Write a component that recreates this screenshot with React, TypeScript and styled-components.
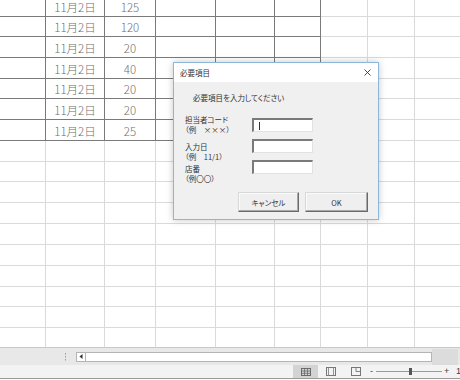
import React from "react";
import styled, { createGlobalStyle } from "styled-components";

const Global = createGlobalStyle`
  html, body { margin: 0; padding: 0; background: #fff; }
  body { width: 460px; height: 380px; overflow: hidden; font-family: "Noto Sans CJK JP", "Noto Sans", sans-serif; }
  * { box-sizing: border-box; }
`;

const COLS = "46px 59px 51px 60px 59px 46px 47px 47px 60px";

const Page = styled.div`
  position: relative;
  width: 460px;
  height: 380px;
  display: flex;
  flex-direction: column;
  overflow: hidden;
`;

const Sheet = styled.div`
  height: 347px;
  overflow: hidden;
  display: flex;
  flex-direction: column;
  flex-shrink: 0;
`;

const Row = styled.div<{ $h: number }>`
  display: grid;
  grid-template-columns: ${COLS};
  height: ${(p) => p.$h}px;
  flex-shrink: 0;
`;

const Cell = styled.div<{ $dark?: boolean }>`
  border-right: 1px solid ${(p) => (p.$dark ? "#7a7a7a" : "#dadada")};
  border-bottom: 1px solid ${(p) => (p.$dark ? "#7a7a7a" : "#dadada")};
  display: flex;
  align-items: flex-end;
  justify-content: center;
  padding-bottom: 2px;
  font-family: "Noto Sans CJK JP", sans-serif;
  font-weight: 300;
  font-size: 11.5px;
  line-height: 14px;
  color: #6e6e6e;
  white-space: nowrap;
`;

const Strip = styled.div`
  height: 18px;
  flex-shrink: 0;
  background: #e8e8e8;
  border-top: 1px solid #c8c8c8;
  display: flex;
  align-items: center;
  padding-left: 64px;
  overflow: hidden;
`;

const Grip = styled.svg`
  width: 3px;
  height: 8px;
  margin-right: 9px;
  flex-shrink: 0;
`;

const ArrowBox = styled.div`
  width: 10px;
  height: 10px;
  flex-shrink: 0;
  background: #fff;
  border: 1px solid #b4b4b4;
  display: flex;
  align-items: center;
  justify-content: center;
`;

const Thumb = styled.div`
  width: 346px;
  height: 10px;
  flex-shrink: 0;
  background: #fff;
  border: 1px solid #b4b4b4;
  border-left: none;
`;

const Track = styled.div`
  width: 26px;
  height: 16px;
  flex-shrink: 0;
  background: #dcdcdc;
`;

const StatusBar = styled.div`
  height: 14px;
  flex-shrink: 0;
  background: #f3f3f3;
  border-bottom: 1px solid #9a9a9a;
  display: flex;
  align-items: stretch;
  padding-left: 293px;
  overflow: hidden;
  font-family: "Liberation Sans", sans-serif;
  font-size: 9px;
  color: #444;
`;

const ViewBtn = styled.div<{ $active?: boolean }>`
  width: 25px;
  flex-shrink: 0;
  background: ${(p) => (p.$active ? "#d3d3d3" : "transparent")};
  display: flex;
  align-items: center;
  justify-content: center;
`;

const ZoomArea = styled.div`
  display: flex;
  align-items: center;
  flex-shrink: 0;
  margin-left: 1px;
  gap: 2px;
`;

const ZoomSign = styled.span`
  line-height: 13px;
  width: 5px;
  text-align: center;
  flex-shrink: 0;
`;

const SliderLine = styled.div`
  width: 66px;
  height: 1px;
  flex-shrink: 0;
  background: #9a9a9a;
  display: flex;
  align-items: center;
  padding-left: 33px;
`;

const SliderThumb = styled.div`
  width: 3px;
  height: 7px;
  background: #555;
`;

const ZoomPct = styled.span`
  margin-left: 5px;
  line-height: 13px;
  flex-shrink: 0;
  white-space: nowrap;
`;

/* dialog */
const Dialog = styled.div`
  position: absolute;
  left: 173px;
  top: 62px;
  width: 206px;
  height: 158px;
  border: 1px solid #8db7d8;
  background: #f0f0f0;
  box-shadow: 0 0 7px rgba(0, 0, 0, 0.22);
  display: flex;
  flex-direction: column;
  font-family: "Noto Sans CJK JP", sans-serif;
  font-feature-settings: "palt";
  font-size: 7px;
  color: #333;
`;

const TitleBar = styled.div`
  height: 19px;
  background: #fff;
  display: flex;
  align-items: center;
  justify-content: space-between;
  padding: 0 7px 0 6px;
  font-size: 7.5px;
  flex-shrink: 0;
`;

const Body = styled.div`
  display: flex;
  flex-direction: column;
  padding: 11px 10px 0 11px;
`;

const Message = styled.div`
  padding-left: 8px;
  line-height: 9px;
  font-size: 7.5px;
`;

const Form = styled.div`
  margin-top: 16px;
  display: grid;
  grid-template-columns: 67px 61px;
  grid-auto-rows: 14px;
  row-gap: 7px;
`;

const Label = styled.div<{ $off: number }>`
  margin-top: ${(p) => p.$off}px;
  line-height: 9.5px;
  font-size: 7.5px;
  white-space: nowrap;
`;

const TextBox = styled.div`
  height: 14px;
  background: #fff;
  border-top: 2px solid #7a7a7a;
  border-left: 2px solid #7a7a7a;
  border-right: 1px solid #e2e2e2;
  border-bottom: 1px solid #e2e2e2;
  display: flex;
  align-items: center;
  padding-left: 5px;
`;

const Caret = styled.span`
  width: 1px;
  height: 8px;
  background: #333;
`;

const Buttons = styled.div`
  margin-top: 18px;
  display: flex;
  justify-content: flex-end;
  gap: 6px;
`;

const Button = styled.div<{ $w: number }>`
  width: ${(p) => p.$w}px;
  height: 20px;
  background: #efefef;
  border: 1px solid;
  border-color: #d8d8d8 #6a6a6a #6a6a6a #d8d8d8;
  box-shadow: inset -1px -1px 0 #a8a8a8, inset 1px 1px 0 #fafafa;
  display: flex;
  align-items: center;
  justify-content: center;
  font-size: 7.5px;
  color: #333;
`;

const heights = [16, 21, 21, 21, 20, 21, 21, 21, 20, 21, 21, 21, 21, 21, 20, 21, 21];
const values = ["125", "120", "20", "40", "20", "20", "25"];

export default function App() {
  return (
    <Page>
      <Global />
      <Sheet>
        {heights.map((h, r) => (
          <Row key={r} $h={h}>
            {Array.from({ length: 9 }).map((_, c) => {
              const dark = r < 7 && c < 6;
              let txt = "";
              if (r < 7 && c === 1) txt = "11月2日";
              if (r < 7 && c === 2) txt = values[r];
              return (
                <Cell key={c} $dark={dark}>
                  {txt}
                </Cell>
              );
            })}
          </Row>
        ))}
      </Sheet>
      <Strip>
        <Grip viewBox="0 0 3 8">
          <rect x="1" y="0" width="1" height="1.5" fill="#9a9a9a" />
          <rect x="1" y="3" width="1" height="1.5" fill="#9a9a9a" />
          <rect x="1" y="6" width="1" height="1.5" fill="#9a9a9a" />
        </Grip>
        <ArrowBox>
          <svg width="4" height="5" viewBox="0 0 4 5">
            <path d="M3.5 0 L0.5 2.5 L3.5 5 Z" fill="#333" />
          </svg>
        </ArrowBox>
        <Thumb />
        <Track />
      </Strip>
      <StatusBar>
        <ViewBtn $active>
          <svg width="10" height="8" viewBox="0 0 10 8">
            <rect x="0.5" y="0.5" width="9" height="7" fill="none" stroke="#6a6a6a" />
            <path d="M3.5 0.5 V7.5 M6.5 0.5 V7.5 M0.5 3 H9.5 M0.5 5.3 H9.5" stroke="#6a6a6a" strokeWidth="0.8" />
          </svg>
        </ViewBtn>
        <ViewBtn>
          <svg width="10" height="9" viewBox="0 0 10 9">
            <rect x="0.5" y="0.5" width="9" height="8" fill="none" stroke="#777" />
            <path d="M2.5 0.5 V8.5 M7.5 0.5 V8.5" stroke="#888" strokeWidth="0.9" />
          </svg>
        </ViewBtn>
        <ViewBtn>
          <svg width="10" height="9" viewBox="0 0 10 9">
            <rect x="0.5" y="0.5" width="9" height="8" fill="none" stroke="#777" />
            <path d="M5 0.5 V4.5 H9.5" fill="none" stroke="#777" strokeWidth="0.9" />
          </svg>
        </ViewBtn>
        <ZoomArea>
          <ZoomSign>-</ZoomSign>
          <SliderLine>
            <SliderThumb />
          </SliderLine>
          <ZoomSign>+</ZoomSign>
          <ZoomPct>100%</ZoomPct>
        </ZoomArea>
      </StatusBar>

      <Dialog>
        <TitleBar>
          <span>必要項目</span>
          <svg width="7" height="7" viewBox="0 0 7 7">
            <path d="M0.5 0.5 L6.5 6.5 M6.5 0.5 L0.5 6.5" stroke="#333" strokeWidth="0.9" />
          </svg>
        </TitleBar>
        <Body>
          <Message>必要項目を入力してください</Message>
          <Form>
            <Label $off={-3}>
              担当者コード
              <br />
              （例　×××）
            </Label>
            <TextBox>
              <Caret />
            </TextBox>
            <Label $off={3}>
              入力日
              <br />
              （例　11/1）
            </Label>
            <TextBox />
            <Label $off={4}>
              店番
              <br />
              （例〇〇）
            </Label>
            <TextBox />
          </Form>
          <Buttons>
            <Button $w={61}>キャンセル</Button>
            <Button $w={63}>OK</Button>
          </Buttons>
        </Body>
      </Dialog>
    </Page>
  );
}
